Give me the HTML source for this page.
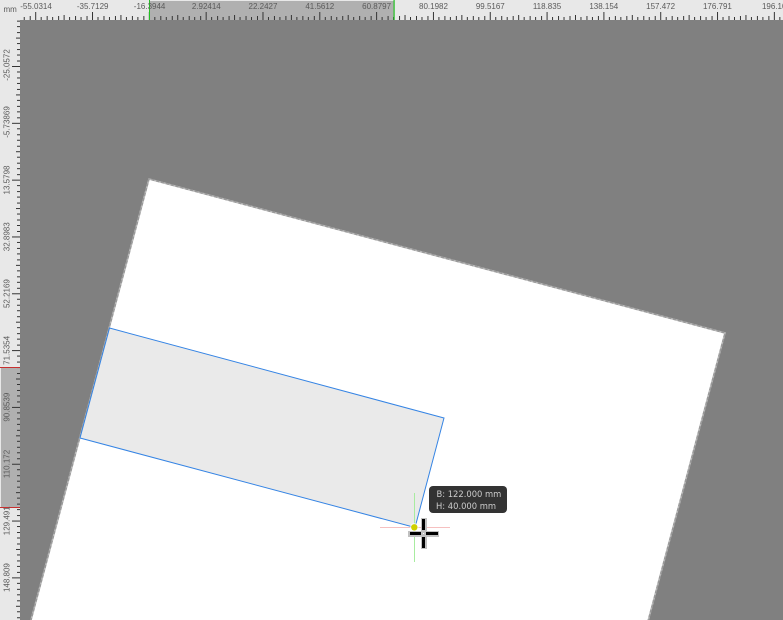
<!DOCTYPE html>
<html>
<head>
<meta charset="utf-8">
<style>
html,body{margin:0;padding:0;background:#808080;width:783px;height:620px;overflow:hidden}
svg{display:block;position:absolute;left:0;top:0}
text{font-family:"Liberation Sans","DejaVu Sans",sans-serif;font-size:8px;fill:#5a5a5a}
.tip{position:absolute;left:429px;top:486px;width:78px;height:27px;background:#333;border-radius:4px;color:#ccc;font:8.4px/12px "DejaVu Sans","Liberation Sans",sans-serif;box-sizing:border-box;padding-top:2px;white-space:pre}
</style>
</head>
<body>
<svg width="783" height="620" viewBox="0 0 783 620">
<defs>
<pattern id="hticks" patternUnits="userSpaceOnUse" x="35.2" y="0" width="56.82" height="20">
<g fill="#333" shape-rendering="crispEdges">
<rect x="0" y="12" width="1" height="8"/>
<rect x="5.68" y="17" width="1" height="3"/>
<rect x="11.36" y="16" width="1" height="4"/>
<rect x="17.05" y="17" width="1" height="3"/>
<rect x="22.73" y="16" width="1" height="4"/>
<rect x="28.41" y="15" width="1" height="5"/>
<rect x="34.09" y="17" width="1" height="3"/>
<rect x="39.77" y="16" width="1" height="4"/>
<rect x="45.46" y="17" width="1" height="3"/>
<rect x="51.14" y="16" width="1" height="4"/>
</g>
</pattern>
<pattern id="vticks" patternUnits="userSpaceOnUse" x="0" y="66" width="20" height="56.82">
<g fill="#333" shape-rendering="crispEdges">
<rect y="0" x="12" height="1" width="8"/>
<rect y="5.68" x="17" height="1" width="3"/>
<rect y="11.36" x="17" height="1" width="3"/>
<rect y="17.05" x="17" height="1" width="3"/>
<rect y="22.73" x="17" height="1" width="3"/>
<rect y="28.41" x="16" height="1" width="4"/>
<rect y="34.09" x="17" height="1" width="3"/>
<rect y="39.77" x="17" height="1" width="3"/>
<rect y="45.46" x="17" height="1" width="3"/>
<rect y="51.14" x="17" height="1" width="3"/>
</g>
</pattern>
</defs>

<!-- canvas -->
<rect x="0" y="0" width="783" height="620" fill="#808080"/>
<polygon points="149,179 725,333 640.3,650 23,650" fill="#fff" stroke="#b8b8b8" stroke-width="1.6"/>
<polyline points="23,650 149,179 725,333 640.3,650" fill="none" stroke="#999" stroke-width="1.4" stroke-dasharray="3 2"/>
<polygon points="109.5,328 444,418 415,527.5 80,438" fill="#eaeaea" stroke="#3584e4" stroke-width="1"/>

<!-- snap guides -->
<line x1="380" y1="527.5" x2="450" y2="527.5" stroke="#f6c0c0" stroke-width="1"/>
<line x1="414.5" y1="493" x2="414.5" y2="562" stroke="#a8eca0" stroke-width="1"/>
<circle cx="414.3" cy="527.3" r="4.3" fill="#fff" opacity=".7"/>
<circle cx="414.3" cy="527.3" r="3.2" fill="#d0d000"/>

<!-- cursor -->
<g shape-rendering="crispEdges">
<rect x="408" y="531" width="31" height="6" fill="#c0c0c0"/>
<rect x="421" y="518" width="6" height="31" fill="#c0c0c0"/>
<rect x="410" y="532" width="11" height="3" fill="#000"/>
<rect x="426" y="532" width="12" height="3" fill="#000"/>
<rect x="422" y="519" width="3" height="11" fill="#000"/>
<rect x="422" y="537" width="3" height="11" fill="#000"/>
<rect x="423" y="533" width="1" height="1" fill="#fff"/>
</g>

<!-- top ruler -->
<rect x="0" y="0" width="783" height="20" fill="#e8e8e8"/>
<rect x="150" y="1" width="244" height="19" fill="#b0b0b0"/>
<rect width="783" height="20" fill="url(#hticks)"/>
<rect x="149" y="0" width="1" height="20" fill="#22c022" shape-rendering="crispEdges"/>
<rect x="393.5" y="0" width="1.2" height="20" fill="#22c022"/>
<g text-anchor="middle">
<text x="36" y="9">-55.0314</text>
<text x="92.7" y="9">-35.7129</text>
<text x="149.6" y="9">-16.3944</text>
<text x="206.3" y="9">2.92414</text>
<text x="263" y="9">22.2427</text>
<text x="319.8" y="9">41.5612</text>
<text x="376.6" y="9">60.8797</text>
<text x="433.5" y="9">80.1982</text>
<text x="490.3" y="9">99.5167</text>
<text x="547" y="9">118.835</text>
<text x="603.8" y="9">138.154</text>
<text x="660.6" y="9">157.472</text>
<text x="717.4" y="9">176.791</text>
<text x="774.2" y="9">196.10</text>
</g>

<!-- left ruler -->
<rect x="0" y="20" width="20" height="600" fill="#e8e8e8"/>
<rect x="1" y="367.5" width="19" height="140" fill="#b0b0b0"/>
<rect x="0" y="0" width="20" height="620" fill="url(#vticks)"/>
<rect x="0" y="367" width="20" height="1" fill="#c83030" shape-rendering="crispEdges"/>
<rect x="0" y="507" width="20" height="1" fill="#c83030" shape-rendering="crispEdges"/>
<g text-anchor="middle">
<text transform="translate(9.5,65) rotate(-90)">-25.0572</text>
<text transform="translate(9.5,122) rotate(-90)">-5.73869</text>
<text transform="translate(9.5,180) rotate(-90)">13.5798</text>
<text transform="translate(9.5,236.8) rotate(-90)">32.8983</text>
<text transform="translate(9.5,293.6) rotate(-90)">52.2169</text>
<text transform="translate(9.5,350.4) rotate(-90)">71.5354</text>
<text transform="translate(9.5,407.2) rotate(-90)">90.8539</text>
<text transform="translate(9.5,464) rotate(-90)">110.172</text>
<text transform="translate(9.5,520.8) rotate(-90)">129.491</text>
<text transform="translate(9.5,577.6) rotate(-90)">148.809</text>
</g>

<!-- corner -->
<rect x="0" y="0" width="20" height="20" fill="#e8e8e8"/>
<text x="3.5" y="12">mm</text>
</svg>
<div class="tip"><span style="margin-left:7.5px">B: 122.000 mm</span>
<span style="margin-left:7px">H: 40.000 mm</span></div>
</body>
</html>
